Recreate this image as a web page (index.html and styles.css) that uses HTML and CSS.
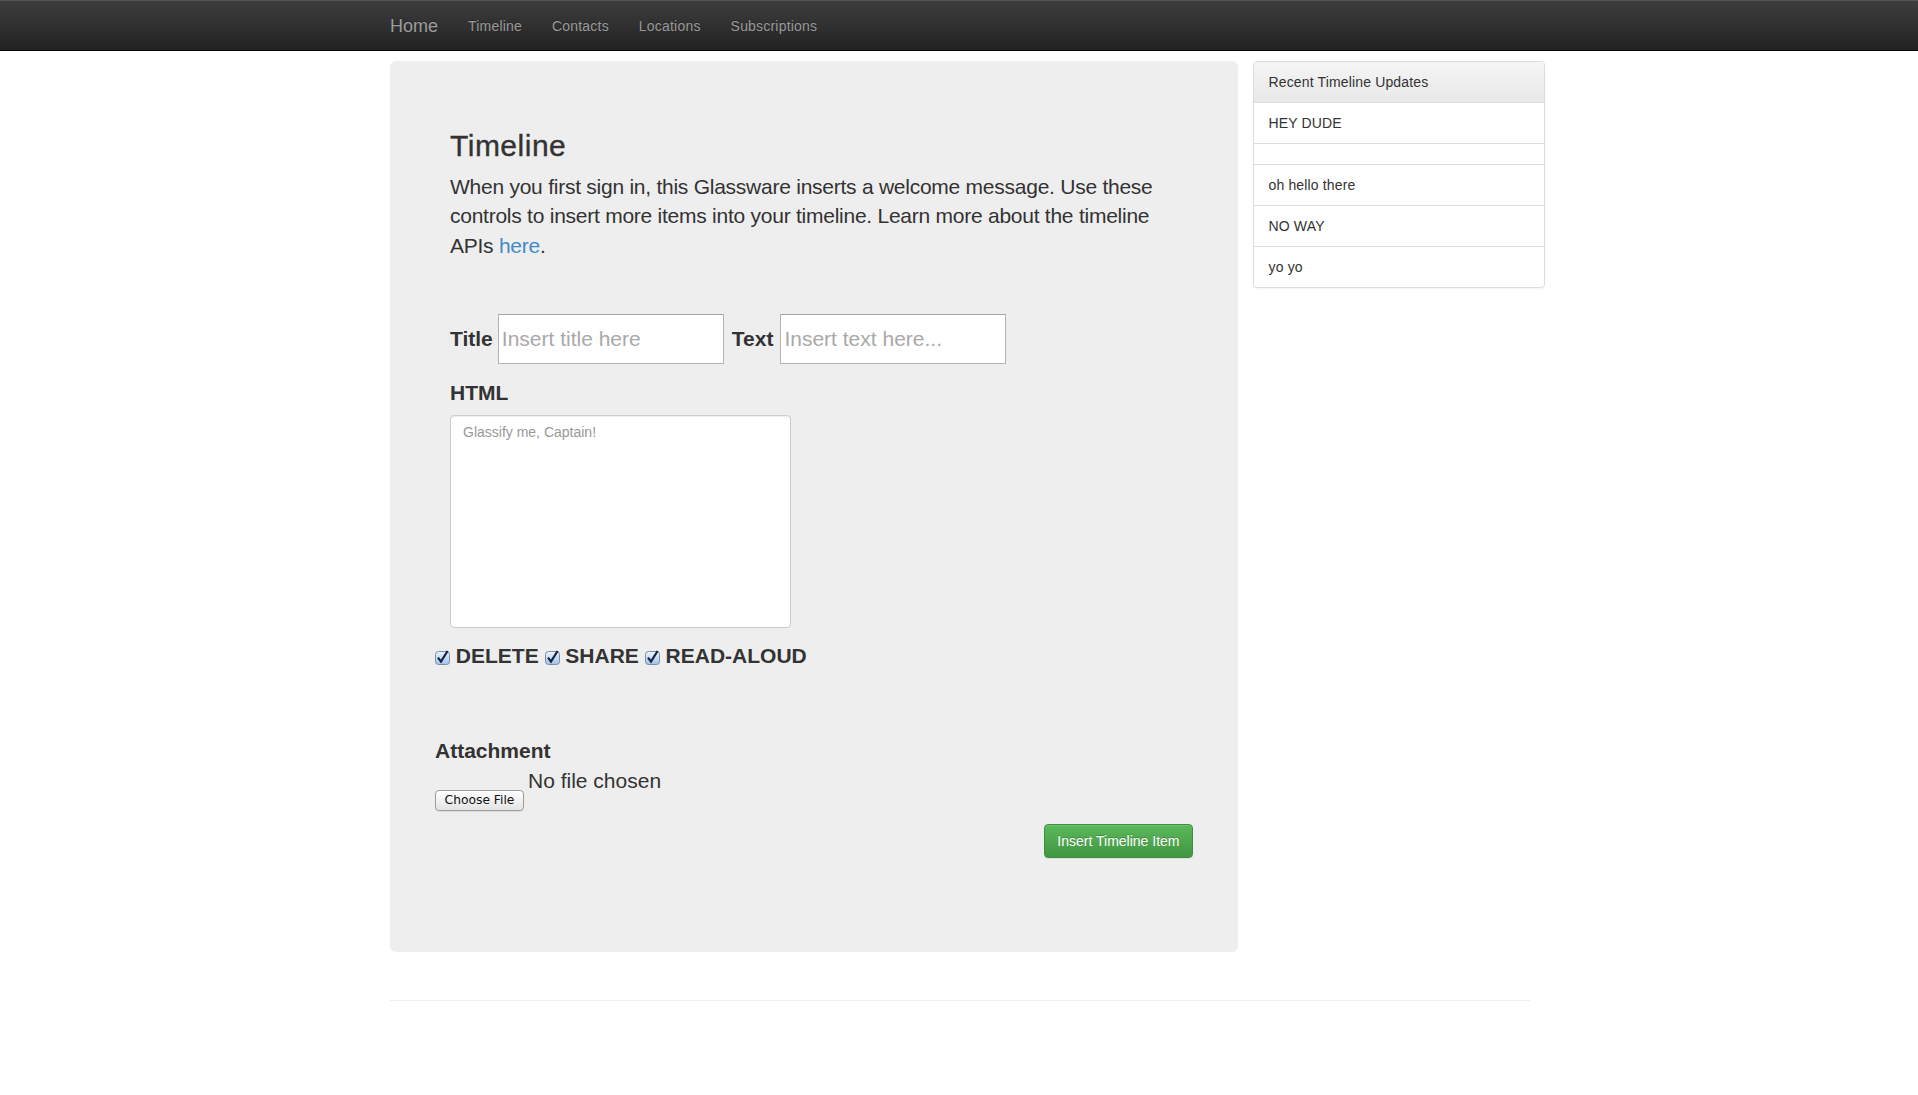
FILE: index.html
```html
<!DOCTYPE html>
<html lang="en">
<head>
<meta charset="utf-8">
<title>Glassware Timeline</title>
<link rel="stylesheet" href="styles.css">
</head>
<body>
<nav class="navbar">
  <div class="navbar-inner">
    <a class="brand" href="#">Home</a>
    <a class="nav-link" href="#">Timeline</a>
    <a class="nav-link" href="#">Contacts</a>
    <a class="nav-link" href="#">Locations</a>
    <a class="nav-link" href="#">Subscriptions</a>
  </div>
</nav>

<div class="container">
  <div class="row">
    <div class="main">
      <div class="jumbotron">
        <h2 class="title">Timeline</h2>
        <p class="lead">When you first sign in, this Glassware inserts a welcome message. Use these controls to insert more items into your timeline. Learn more about the timeline APIs <a href="#">here</a>.</p>
        <form class="timeline-form">
          <div class="field-row">
            <label class="field-label">Title</label>
            <input class="text-input first" type="text" placeholder="Insert title here">
            <label class="field-label second">Text</label>
            <input class="text-input" type="text" placeholder="Insert text here...">
          </div>
          <label class="block-label">HTML</label>
          <textarea class="html-area" placeholder="Glassify me, Captain!"></textarea>
          <div class="extras">
            <div class="checks">
              <label class="opt"><svg class="chk" width="15" height="15" viewBox="0 0 15 15"><defs><linearGradient id="g1" x1="0" y1="0" x2="0" y2="1"><stop offset="0" stop-color="#eef5fd"/><stop offset="0.5" stop-color="#c6dcf5"/><stop offset="1" stop-color="#9fc2ec"/></linearGradient></defs><rect x="0.5" y="1.5" width="14" height="13" rx="3" fill="url(#g1)" stroke="#7e8ca4"/><path d="M3 7.6 L6 11.6 L12.6 1" fill="none" stroke="#17223a" stroke-width="2.2" stroke-linejoin="miter"/></svg> DELETE</label>
              <label class="opt"><svg class="chk" width="15" height="15" viewBox="0 0 15 15"><defs><linearGradient id="g2" x1="0" y1="0" x2="0" y2="1"><stop offset="0" stop-color="#eef5fd"/><stop offset="0.5" stop-color="#c6dcf5"/><stop offset="1" stop-color="#9fc2ec"/></linearGradient></defs><rect x="0.5" y="1.5" width="14" height="13" rx="3" fill="url(#g2)" stroke="#7e8ca4"/><path d="M3 7.6 L6 11.6 L12.6 1" fill="none" stroke="#17223a" stroke-width="2.2" stroke-linejoin="miter"/></svg> SHARE</label>
              <label class="opt"><svg class="chk" width="15" height="15" viewBox="0 0 15 15"><defs><linearGradient id="g3" x1="0" y1="0" x2="0" y2="1"><stop offset="0" stop-color="#eef5fd"/><stop offset="0.5" stop-color="#c6dcf5"/><stop offset="1" stop-color="#9fc2ec"/></linearGradient></defs><rect x="0.5" y="1.5" width="14" height="13" rx="3" fill="url(#g3)" stroke="#7e8ca4"/><path d="M3 7.6 L6 11.6 L12.6 1" fill="none" stroke="#17223a" stroke-width="2.2" stroke-linejoin="miter"/></svg> READ-ALOUD</label>
            </div>
            <div class="attach-label">Attachment</div>
            <div class="file-row">
              <button type="button" class="file-btn">Choose File</button>
              <span class="file-name">No file chosen</span>
            </div>
            <div class="submit-row">
              <button type="button" class="btn-success">Insert Timeline Item</button>
            </div>
          </div>
        </form>
      </div>
    </div>
    <div class="side">
      <div class="panel">
        <div class="panel-heading">Recent Timeline Updates</div>
        <div class="list-item">HEY DUDE</div>
        <div class="list-item"></div>
        <div class="list-item">oh hello there</div>
        <div class="list-item">NO WAY</div>
        <div class="list-item">yo yo</div>
      </div>
    </div>
  </div>
  <hr class="footer-rule">
</div>
</body>
</html>
```

FILE: styles.css
```css
* {
  box-sizing: border-box;
}

body {
  margin: 0;
  font-family: "Liberation Sans", Arial, Helvetica, sans-serif;
  font-size: 14px;
  line-height: 20px;
  color: #333;
  background: #fff;
}

/* Navbar */
.navbar {
  height: 51px;
  background: linear-gradient(to bottom, #3e3e3e 0, #222 100%);
  border-bottom: 1px solid #080808;
  box-shadow: inset 0 1px 0 rgba(255, 255, 255, 0.12);
}

.navbar-inner {
  width: 1140px;
  margin-left: calc(50% - 569px);
  display: flex;
}

.brand {
  font-size: 18px;
  line-height: 20px;
  padding: 16px 15px 14px 0;
  color: #9d9d9d;
  text-decoration: none;
  text-shadow: 0 -1px 0 rgba(0, 0, 0, 0.25);
}

.nav-link {
  font-size: 14px;
  line-height: 20px;
  letter-spacing: 0.2px;
  padding: 16px 15px 14px;
  color: #999;
  text-decoration: none;
  text-shadow: 0 -1px 0 rgba(0, 0, 0, 0.25);
}

/* Layout */
.container {
  width: 1170px;
  margin-left: calc(50% - 584px);
  padding: 0 15px;
}

.row {
  display: flex;
  align-items: flex-start;
  margin: 10px -15px 0;
}

.main {
  width: 75%;
  padding: 0 15px;
}

.side {
  width: 25%;
}

/* Jumbotron */
.jumbotron {
  background: #eee;
  border-radius: 6px;
  padding: 48px 60px 50px;
  font-size: 21px;
  line-height: 45px;
  margin-bottom: 28px;
}

.title {
  margin: 20px 0 10px;
  font-size: 30px;
  line-height: 33px;
  font-weight: 500;
  letter-spacing: 0.5px;
  -webkit-text-stroke: 0.35px #333;
}

.lead {
  margin: 0;
  line-height: 1.4;
  letter-spacing: -0.25px;
}

.lead a {
  color: #428bca;
  text-decoration: none;
}

/* Form */
.field-row {
  display: flex;
  align-items: center;
  height: 50px;
  margin-top: 54px;
}

.field-label {
  font-weight: bold;
  line-height: 24px;
  margin-right: 5px;
}

.field-label.second {
  margin-right: 7px;
}

.text-input {
  width: 226px;
  height: 50px;
  border: 1px solid #b4b4b4;
  border-top-color: #a5a5a5;
  border-radius: 0;
  padding: 0 3px;
  font-family: "Liberation Sans", Arial, sans-serif;
  font-size: 21px;
  color: #333;
  background: #fff;
  outline: none;
}

.text-input.first {
  margin-right: 8px;
}

.text-input::placeholder {
  color: #a9a9a9;
}

.block-label {
  display: block;
  font-weight: bold;
  line-height: 24px;
  margin: 17px 0 10px;
}

.html-area {
  display: block;
  width: 341px;
  height: 213px;
  border: 1px solid #ccc;
  border-radius: 4px;
  padding: 6px 12px;
  font-family: "Liberation Sans", Arial, sans-serif;
  font-size: 14px;
  line-height: 20px;
  color: #333;
  background: #fff;
  box-shadow: inset 0 1px 1px rgba(0, 0, 0, 0.075);
  resize: none;
  outline: none;
}

.html-area::placeholder {
  color: #999;
}

.extras {
  margin: 0 -15px;
}

.checks {
  margin-top: 16px;
  line-height: 24px;
  font-weight: bold;
}

.opt {
  margin-right: 0;
}

.chk {
  vertical-align: -2px;
}

.attach-label {
  margin-top: 71px;
  line-height: 24px;
  font-weight: bold;
}

.file-row {
  display: flex;
  align-items: flex-start;
  margin-top: 6px;
}

.file-btn {
  width: 89px;
  height: 21px;
  margin: 21px 0 0;
  padding: 0;
  border: 1px solid #9c9c9c;
  border-radius: 4px;
  background: linear-gradient(to bottom, #ffffff 0, #f1f1f1 50%, #e4e4e4 100%);
  font-family: "DejaVu Sans", Verdana, sans-serif;
  font-size: 12.3px;
  line-height: 19px;
  color: #111;
  box-shadow: 0 1px 1px rgba(0, 0, 0, 0.08);
}

.file-name {
  margin-left: 4px;
  line-height: 24px;
}

.submit-row {
  display: flex;
  justify-content: flex-end;
  margin-top: 13px;
  margin-bottom: 44px;
}

.btn-success {
  padding: 6px 12px;
  font-family: "Liberation Sans", Arial, sans-serif;
  font-size: 14px;
  line-height: 20px;
  color: #fff;
  border: 1px solid #3e8f3e;
  border-radius: 4px;
  background: linear-gradient(to bottom, #5cb85c 0, #419641 100%);
  text-shadow: 0 -1px 0 rgba(0, 0, 0, 0.2);
  box-shadow: inset 0 1px 0 rgba(255, 255, 255, 0.15), 0 1px 1px rgba(0, 0, 0, 0.075);
}

/* Sidebar panel */
.panel {
  background: #fff;
  border: 1px solid #ddd;
  border-radius: 4px;
  box-shadow: 0 1px 2px rgba(0, 0, 0, 0.05);
  overflow: hidden;
  letter-spacing: 0.15px;
}

.panel-heading {
  padding: 10px 15px;
  line-height: 20px;
  background: linear-gradient(to bottom, #f5f5f5 0, #e8e8e8 100%);
  border-bottom: 1px solid #ddd;
}

.list-item {
  padding: 10px 15px;
  line-height: 20px;
  border-bottom: 1px solid #ddd;
}

.list-item:last-child {
  border-bottom: 0;
}

/* Footer */
.footer-rule {
  margin: 20px 0;
  border: 0;
  border-top: 1px solid #eee;
}
```
